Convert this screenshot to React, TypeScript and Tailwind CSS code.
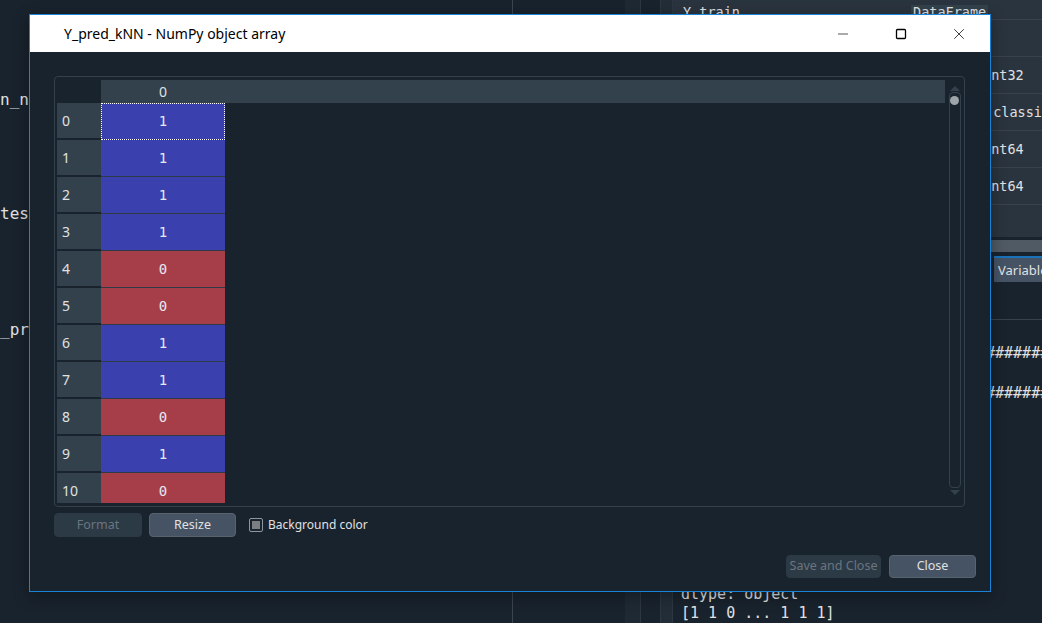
import { Minus, Square, X } from 'lucide-react';

const values = [1, 1, 1, 1, 0, 0, 1, 1, 0, 1, 0];

const ui = { fontFamily: '"Noto Sans", "Open Sans", sans-serif' };
const mono = { fontFamily: '"DejaVu Sans Mono", "Liberation Mono", monospace' };

const types = [
  { text: '', ml: 'ml-[310px]' },
  { text: 'int32', ml: 'ml-[310px]' },
  { text: '.classifier', ml: 'ml-[312px]' },
  { text: 'int64', ml: 'ml-[310px]' },
  { text: 'int64', ml: 'ml-[310px]' },
];

function Background() {
  return (
    <div className="flex h-full w-full" style={mono}>
      {/* editor */}
      <div className="w-[513px] shrink-0 border-r border-[#3a4550] text-[16px] leading-[19px] text-[#e0e1e3]">
        <div className="whitespace-nowrap pt-[90px]">n_neighbors = 5</div>
        <div className="whitespace-nowrap pt-[95px]">test_size = 0.3</div>
        <div className="whitespace-nowrap pt-[97px]">_pred = knn.predict(X)</div>
      </div>
      <div className="w-[112px] shrink-0" />
      <div className="w-[16px] shrink-0 border-r border-[#2c3741] bg-[#1e2933]" />
      <div className="w-[20px] shrink-0 border-r border-[#2c3741]" />
      <div className="w-[12px] shrink-0 border-r border-[#2c3741] bg-[#222d38]" />
      {/* right pane */}
      <div className="flex min-w-0 flex-1 flex-col">
        <div className="h-[237px] bg-[#2a343e] text-[13.5px] text-[#e0e1e3]">
          <div className="flex h-[20px] items-end border-b border-[#37424c] leading-[14px]">
            <span className="ml-[10px] w-[228px] shrink-0">Y_train</span>
            <span className="bg-[#32414b] px-[2px]">DataFrame</span>
          </div>
          {types.map((t, i) => (
            <div key={i} className="flex h-[37px] items-center border-b border-[#37424c]">
              <span className={`${t.ml} whitespace-nowrap`}>{t.text}</span>
            </div>
          ))}
        </div>
        <div className="h-[3px] bg-[#19232d]" />
        <div className="h-[12px] bg-[#4f5a64]" />
        <div className="flex h-[30px] items-end bg-[#19232d] pl-[321px]">
          <div
            className="h-[26px] whitespace-nowrap border-t-2 border-[#1a72bb] bg-[#455364] px-[4px] text-[13px] leading-[24px] text-[#e0e1e3]"
            style={ui}
          >
            Variable explorer
          </div>
        </div>
        <div className="h-[38px] border-b border-[#37424c]" />
        <div className="whitespace-nowrap pl-[8px] pt-[13px] text-[15px] leading-[40px] text-[#e0e1e3]">
          <div className="pl-[305px]">#####################</div>
          <div className="pl-[305px]">#####################</div>
          <div className="pt-[173px] leading-[17px]">dtype: object</div>
          <div className="leading-[20px]">[1 1 0 ... 1 1 1]</div>
        </div>
      </div>
    </div>
  );
}

function Button({ label, disabled, className }: { label: string; disabled?: boolean; className: string }) {
  return (
    <div
      className={`flex items-center justify-center rounded-[4px] border text-[12.5px] ${
        disabled ? 'border-[#2c3a45] bg-[#2c3a45] text-[#6a7580]' : 'border-[#56636e] bg-[#455364] text-[#e0e1e3]'
      } ${className}`}
    >
      {label}
    </div>
  );
}

export default function App() {
  return (
    <div className="relative h-[623px] w-[1042px] overflow-hidden bg-[#19232d]" style={ui}>
      <Background />

      {/* dialog */}
      <div className="absolute left-[29px] top-[14px] flex h-[578px] w-[962px] flex-col border border-[#1883d7] shadow-[0_4px_14px_rgba(0,0,0,0.35)]">
        <div className="flex h-[37px] items-center bg-white">
          <span className="ml-[34px] flex-1 text-[14px] text-black">Y_pred_kNN - NumPy object array</span>
          <div className="flex h-full w-[58px] items-center justify-center">
            <Minus size={16} strokeWidth={1} className="text-black" />
          </div>
          <div className="flex h-full w-[58px] items-center justify-center">
            <Square size={12} strokeWidth={1.3} className="text-black" absoluteStrokeWidth />
          </div>
          <div className="mr-[2px] flex h-full w-[58px] items-center justify-center">
            <X size={18} strokeWidth={1} className="text-black" />
          </div>
        </div>

        <div className="flex flex-1 flex-col bg-[#19232d] pb-[13px] pl-[24px] pr-[14px] pt-[24px]">
          {/* table frame */}
          <div className="mr-[11px] flex h-[431px] flex-col rounded-[4px] border border-[#32414b] px-[2px] py-[3px]">
            <div className="flex flex-1 overflow-hidden">
              <div className="flex flex-1 flex-col overflow-hidden">
                <div className="flex h-[23px] shrink-0">
                  <div className="w-[44px] shrink-0 bg-[#19232d]" />
                  <div className="flex w-[124px] items-center justify-center bg-[#32414b] text-[14px] text-[#e0e1e3]">0</div>
                  <div className="flex-1 bg-[#32414b]" />
                </div>
                <div className="flex flex-col overflow-hidden">
                  {values.map((v, i) => (
                    <div key={i} className="flex h-[37px] shrink-0">
                      <div className="flex w-[44px] items-center border-b-2 border-[#19232d] bg-[#32414b] pl-[5px] text-[14px] text-[#e0e1e3]">
                        {i}
                      </div>
                      <div
                        className={`flex w-[124px] items-center justify-center border-b border-[#2e3a46] text-[14px] text-[#e8e8ef] ${
                          v ? 'bg-[#3a40ad]' : 'bg-[#a63e4a]'
                        } ${i === 0 ? 'outline outline-1 -outline-offset-1 outline-dotted outline-white' : ''}`}
                        style={mono}
                      >
                        {v}
                      </div>
                    </div>
                  ))}
                </div>
              </div>
              {/* scrollbar */}
              <div className="ml-[2px] flex w-[15px] flex-col items-center">
                <svg width="10" height="6" className="mt-[5px]" viewBox="0 0 10 6">
                  <path d="M0 6 L5 1 L10 6 Z" fill="#32414b" />
                </svg>
                <div className="mt-[1px] flex w-[12px] flex-1 flex-col items-center rounded-[4px] border border-[#32414b] pt-[3px]">
                  <div className="h-[9px] w-[9px] rounded-full bg-[#9da4aa]" />
                </div>
                <svg width="10" height="6" className="mb-[7px] mt-[2px]" viewBox="0 0 10 6">
                  <path d="M0 0 L5 5 L10 0 Z" fill="#32414b" />
                </svg>
              </div>
            </div>
          </div>

          {/* table buttons */}
          <div className="mt-[6px] flex items-center">
            <Button label="Format" disabled className="h-[24px] w-[88px]" />
            <Button label="Resize" className="ml-[7px] h-[24px] w-[87px]" />
            <div className="ml-[13px] flex h-[14px] w-[14px] items-center justify-center rounded-[2px] border border-[#8e979f]">
              <div className="h-[8px] w-[8px] bg-[#7c7f82]" />
            </div>
            <span className="ml-[5px] text-[12px] text-[#e0e1e3]">Background color</span>
          </div>

          <div className="mt-auto flex justify-end gap-[8px]">
            <Button label="Save and Close" disabled className="h-[23px] w-[95px]" />
            <Button label="Close" className="h-[23px] w-[87px]" />
          </div>
        </div>
      </div>
    </div>
  );
}
